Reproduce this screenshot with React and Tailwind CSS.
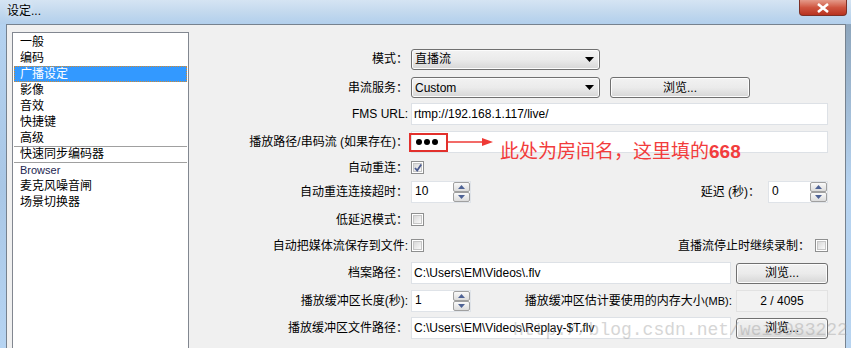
import React from "react";

const ui = "font-['Liberation_Sans','Noto_Sans_CJK_SC',sans-serif]";

function Label({ children }) {
  return <div className="w-[219px] shrink-0 text-right whitespace-nowrap">{children}</div>;
}

function Arrow() {
  return (
    <svg width="9" height="5" viewBox="0 0 9 5">
      <path d="M0 0h9L4.5 5z" fill="#000" />
    </svg>
  );
}

function Dropdown({ text, w }) {
  return (
    <div className={`flex h-[21px] items-center justify-between rounded-[3px] border border-[#707070] bg-gradient-to-b from-[#f2f2f2] via-[#ebebeb] to-[#d6d6d6] pl-[3px] pr-[5px] shadow-[inset_0_0_0_1px_#fcfcfc] ${w}`}>
      <span>{text}</span>
      <Arrow />
    </div>
  );
}

function Button({ w, h = "h-[21px]" }) {
  return (
    <div className={`flex items-center justify-center rounded-[3px] border border-[#707070] bg-gradient-to-b from-[#f2f2f2] via-[#ebebeb] to-[#d6d6d6] shadow-[inset_0_0_0_1px_#fcfcfc] ${w} ${h}`}>
      浏览...
    </div>
  );
}

function Input({ w, children }) {
  return (
    <div className={`flex h-[22px] items-center border border-[#dde1e6] bg-white pl-[2px] ${w}`}>
      {children}
    </div>
  );
}

function SpinBtn({ up }) {
  return (
    <div className="flex h-[11px] items-center justify-center rounded-[2px] border border-[#a0a0a0] bg-gradient-to-b from-[#fafafa] to-[#dcdcdc]">
      <svg width="7" height="4" viewBox="0 0 7 4">
        <path d={up ? "M0 4h7L3.5 0z" : "M0 0h7L3.5 4z"} fill="#4e6295" />
      </svg>
    </div>
  );
}

function Spinner({ value }) {
  return (
    <div className="flex h-[22px] w-[60px] border border-[#dfe3e8] bg-white">
      <div className="flex-1 pl-[3px] pt-[2px] leading-[14px]">{value}</div>
      <div className="flex w-[17px] flex-col">
        <SpinBtn up />
        <SpinBtn />
      </div>
    </div>
  );
}

function Check({ checked }) {
  return (
    <div className="relative h-[13px] w-[13px] shrink-0 border border-[#8e8f8f] bg-white p-[1px]">
      <div className="h-full w-full border border-[#c6c6c6] bg-gradient-to-br from-[#d8d8d8] to-[#fafafa]" />
      {checked && (
        <svg className="absolute left-[1px] top-[1px]" width="10" height="10" viewBox="0 0 10 10">
          <path d="M2 5l2.2 2.6L8.2 1.5" stroke="#4a5a8e" strokeWidth="1.8" fill="none" />
        </svg>
      )}
    </div>
  );
}

const items = ["一般", "编码", "广播设定", "影像", "音效", "快捷键", "高级"];
const items2 = ["麦克风噪音闸", "场景切换器"];

export default function App() {
  return (
    <div className={`relative h-[348px] w-[851px] overflow-hidden bg-[#b8d4f0] text-[12px] text-black ${ui}`}>
      {/* title bar */}
      <div className="flex h-[24px] items-start justify-between bg-gradient-to-b from-[#d5e4f3] via-[#c3d9ee] to-[#b2cfec]">
        <div className="pl-[7px] pt-[3px] leading-[16px] [text-shadow:0_0_6px_#fff]">设定...</div>
        <div className="mr-[4px] flex h-[16px] w-[48px] items-center justify-center rounded-b-[4px] border border-t-0 border-[#7d3026] bg-gradient-to-b from-[#e49a8a] via-[#cf5540] to-[#b8321f]">
          <svg width="14" height="10" viewBox="0 0 14 10">
            <path d="M2 1l10 8M12 1L2 9" stroke="#fff" strokeWidth="2.6" />
          </svg>
        </div>
      </div>

      <div className="flex h-[324px]">
        <div className="w-[6px] bg-gradient-to-b from-[#b4d2f0] via-[#a9c7e6] to-[#b6d4f2]" />
        <div className="flex w-[840px] border-l border-r border-t border-[#76828f] bg-[#f0f0f0]">
          {/* list box */}
          <div className="ml-[5px] mt-[7px] h-[330px] w-[177px] shrink-0 border border-[#828790] bg-white px-[1px] pt-[1px]">
            {items.map((t) => (
              <div
                key={t}
                className={
                  t === "广播设定"
                    ? "h-[16px] border border-dotted border-[#d48a2c] bg-[#3399ff] pl-[5px] leading-[14px] text-white"
                    : "h-[16px] pl-[6px] leading-[16px]"
                }
              >
                {t}
              </div>
            ))}
            <div className="h-[16px] border-t border-[#a0a0a0] pl-[6px] leading-[15px]">快速同步编码器</div>
            <div className="h-[16px] border-t border-[#a0a0a0] pl-[6px] text-[11px] leading-[15px] text-[#1c2650]">Browser</div>
            {items2.map((t) => (
              <div key={t} className="h-[16px] pl-[6px] leading-[16px]">
                {t}
              </div>
            ))}
          </div>

          {/* form */}
          <div className="relative flex-1 pt-[24px]">
            <div className="flex h-[20px] items-center">
              <Label>模式：</Label>
              <div className="ml-[3px]">
                <Dropdown text="直播流" w="w-[189px]" />
              </div>
            </div>

            <div className="mt-[8px] flex h-[21px] items-center">
              <Label>串流服务：</Label>
              <div className="ml-[3px] flex gap-[10px]">
                <Dropdown text="Custom" w="w-[189px]" />
                <Button w="w-[140px]" />
              </div>
            </div>

            <div className="mt-[5px] flex h-[22px] items-center">
              <Label>FMS URL:</Label>
              <div className="ml-[3px]">
                <Input w="w-[417px]">rtmp://192.168.1.117/live/</Input>
              </div>
            </div>

            <div className="mt-[6px] flex h-[22px] items-center">
              <Label>播放路径/串码流 (如果存在)：</Label>
              <div className="ml-[3px]">
                <Input w="w-[417px]">
                  <div className="ml-[2px] flex gap-[2px]">
                    <div className="h-[6px] w-[6px] rounded-full bg-black" />
                    <div className="h-[6px] w-[6px] rounded-full bg-black" />
                    <div className="h-[6px] w-[6px] rounded-full bg-black" />
                  </div>
                </Input>
              </div>
            </div>

            <div className="mt-[8px] flex h-[13px] items-center">
              <Label>自动重连：</Label>
              <div className="ml-[3px]">
                <Check checked />
              </div>
            </div>

            <div className="mt-[7px] flex h-[22px] items-center">
              <Label>自动重连连接超时：</Label>
              <div className="ml-[3px] flex w-[417px] items-center">
                <Spinner value="10" />
                <div className="flex-1 pr-[8px] text-right">延迟 (秒)：</div>
                <Spinner value="0" />
              </div>
            </div>

            <div className="mt-[10px] flex h-[13px] items-center">
              <Label>低延迟模式：</Label>
              <div className="ml-[3px]">
                <Check />
              </div>
            </div>

            <div className="mt-[13px] flex h-[13px] items-center">
              <Label>自动把媒体流保存到文件:</Label>
              <div className="ml-[3px] flex w-[417px] items-center">
                <Check />
                <div className="flex-1 pr-[5px] text-right">直播流停止时继续录制：</div>
                <Check />
              </div>
            </div>

            <div className="mt-[10px] flex h-[22px] items-center">
              <Label>档案路径：</Label>
              <div className="ml-[3px] flex items-center gap-[5px]">
                <Input w="w-[320px]">C:\Users\EM\Videos\.flv</Input>
                <Button w="w-[92px]" />
              </div>
            </div>

            <div className="mt-[6px] flex h-[22px] items-center">
              <Label>播放缓冲区长度(秒):</Label>
              <div className="ml-[3px] flex w-[417px] items-center">
                <Spinner value="1" />
                <div className="flex-1 pr-[4px] text-right">
                  播放缓冲区估计要使用的内存大小<span className="text-[11px]">(MB)</span>:
                </div>
                <div className="flex h-[22px] w-[92px] items-center justify-center border border-[#e2e2e2] bg-[#f2f2f2]">2 / 4095</div>
              </div>
            </div>

            <div className="mt-[5px] flex h-[22px] items-center">
              <Label>播放缓冲区文件路径：</Label>
              <div className="ml-[3px] flex items-center gap-[5px]">
                <Input w="w-[320px]">C:\Users\EM\Videos\Replay-$T.flv</Input>
                <Button w="w-[92px]" />
              </div>
            </div>

            {/* red annotation */}
            <div className="pointer-events-none absolute left-[220px] top-[108px] h-[19px] w-[39px] border-2 border-[#e2302c]" />
            <svg className="pointer-events-none absolute left-[259px] top-[112px]" width="48" height="10" viewBox="0 0 48 10">
              <path d="M0 5h36" stroke="#ee3a36" strokeWidth="1.6" />
              <path d="M34 1l11 4-11 4z" fill="#ee3a36" />
            </svg>
            <div className="pointer-events-none absolute left-[311px] top-[116px] whitespace-nowrap text-[19px] leading-[22px] text-[#f23c3c]">
              此处为房间名，这里填的<span className="font-bold">668</span>
            </div>

            {/* watermark */}
            <div className="pointer-events-none absolute left-[324px] top-[292px] whitespace-nowrap font-['Liberation_Mono',monospace] text-[18px] text-[#9a9a9a] opacity-40">
              http://blog.csdn.net/wei3083222
            </div>
          </div>
        </div>
        <div className="w-[5px] bg-gradient-to-b from-[#8ea6bd] via-[#b6d3f0] to-[#b8d4f0]" />
      </div>
    </div>
  );
}
